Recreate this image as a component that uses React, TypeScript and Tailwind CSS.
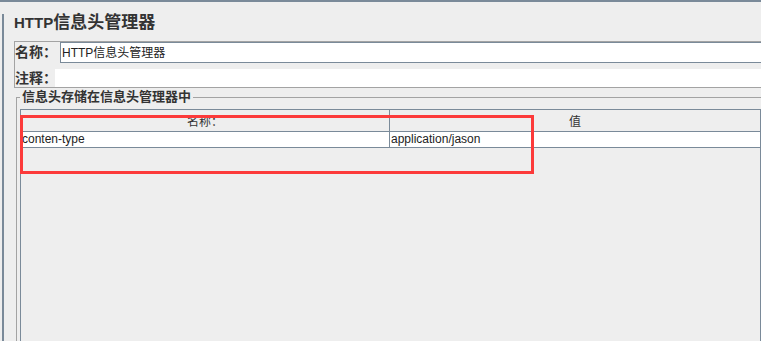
import React from "react";

const font = { fontFamily: '"Liberation Sans", "Noto Sans CJK SC", sans-serif' };

export default function App() {
  return (
    <div
      className="w-[761px] h-[341px] overflow-hidden bg-[#eeeeee] border-t-2 border-[#7a8a99] text-[#333333]"
      style={font}
    >
      <div className="ml-[2px] h-full border-l-2 border-[#7a8a99] pl-[10px]">
        {/* Title */}
        <div className="mt-[12px] mb-[10px] h-[17px] leading-[17px] text-[17px] font-bold whitespace-nowrap">
          <span className="text-[15px]">HTTP</span>信息头管理器
        </div>

        {/* Name / comment box */}
        <div className="w-[760px] border border-[#a3a3a3] flex flex-col">
          <div className="flex h-[21px]">
            <div className="w-[45px] shrink-0 text-[14px] font-bold leading-[21px] whitespace-nowrap">
              名称：
            </div>
            <div className="flex-1 h-[21px] bg-white border border-[#7a8a99] flex items-center pl-[1px] text-[12px] text-[#222]">
              HTTP信息头管理器
            </div>
          </div>
          <div className="flex h-[18px] mt-[6px]">
            <div className="w-[40px] shrink-0 text-[14px] font-bold leading-[18px] whitespace-nowrap">
              注释：
            </div>
            <div className="flex-1 h-[18px] bg-white" />
          </div>
        </div>

        {/* Fieldset */}
        <fieldset className="ml-[2px] w-[760px] border border-[#a3a3a3] pl-[3px] h-[260px]">
          <legend className="px-[2px] text-[13px] font-bold leading-[18px] whitespace-nowrap">
            信息头存储在信息头管理器中
          </legend>
          <div className="relative mt-[3px] w-[741px] h-[240px] border border-[#7a8a99]">
            <div className="flex h-[22px] border-b border-[#7a8a99] text-[12px] text-[#333]">
              <div className="w-[369px] border-r border-[#7a8a99] flex items-center justify-center pt-[2px]">
                名称：
              </div>
              <div className="flex-1 flex items-center justify-center pt-[2px]">值</div>
            </div>
            <div className="flex h-[16px] border-b border-[#7a8a99] bg-white text-[12px] leading-[15px] text-[#222]">
              <div className="w-[369px] border-r border-[#7a8a99] pl-[1px] whitespace-nowrap">
                conten-type
              </div>
              <div className="flex-1 pl-[1px] whitespace-nowrap">application/jason</div>
            </div>
            <div className="absolute left-[-1px] top-[5px] w-[514px] h-[59px] border-[3px] border-[#fc3a3a]" />
          </div>
        </fieldset>
      </div>
    </div>
  );
}
